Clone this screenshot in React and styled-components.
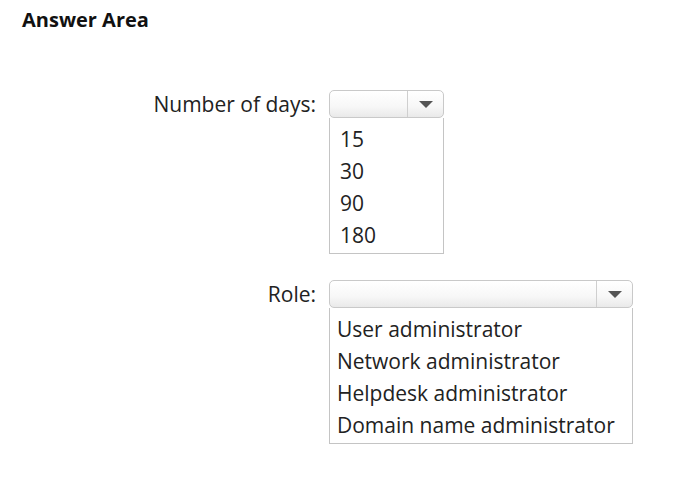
import styled, { createGlobalStyle } from "styled-components";

const GlobalStyle = createGlobalStyle`
  body {
    margin: 0;
    background: #ffffff;
    font-family: "Open Sans", "Noto Sans", sans-serif;
    color: #222;
  }
`;

const Page = styled.div`
  width: 676px;
  height: 481px;
  padding: 6px 0 0 22px;
  box-sizing: border-box;
`;

const Title = styled.h1`
  margin: 0;
  font-size: 20px;
  font-weight: 700;
  color: #111;
  line-height: 28px;
`;

const Form = styled.div`
  display: grid;
  grid-template-columns: 294px auto;
  column-gap: 13px;
  row-gap: 26px;
  margin-top: 56px;
  align-items: start;
`;

const Label = styled.div`
  text-align: right;
  font-size: 21px;
  line-height: 28px;
  color: #222;
`;

const Select = styled.div`
  display: flex;
  flex-direction: column;
  width: ${(p) => p.width}px;
`;

const Box = styled.div`
  display: flex;
  height: 28px;
  box-sizing: border-box;
  border: 1px solid #c9c9c9;
  border-radius: 5px;
  background: linear-gradient(#ffffff 0%, #f7f7f7 60%, #e9e9e9 100%);
`;

const Value = styled.div`
  flex: 1;
`;

const Arrow = styled.div`
  width: 35px;
  border-left: 1px solid #cfcfcf;
  display: flex;
  align-items: center;
  justify-content: center;

  &::after {
    content: "";
    border-left: 7px solid transparent;
    border-right: 7px solid transparent;
    border-top: 7px solid #555;
  }
`;

const List = styled.ul`
  list-style: none;
  margin: 0;
  padding: 5px 0 2px ${(p) => p.indent}px;
  border: 1px solid #c4c4c4;
  border-top: none;
  width: ${(p) => p.width}px;
  box-sizing: border-box;
`;

const Item = styled.li`
  font-size: 21px;
  line-height: 32px;
  color: #222;
`;

function Dropdown({ width, indent, options }) {
  return (
    <Select width={width}>
      <Box>
        <Value />
        <Arrow />
      </Box>
      <List width={width} indent={indent}>
        {options.map((o) => (
          <Item key={o}>{o}</Item>
        ))}
      </List>
    </Select>
  );
}

export default function App() {
  return (
    <>
      <GlobalStyle />
      <Page>
        <Title>Answer Area</Title>
        <Form>
          <Label>Number of days:</Label>
          <Dropdown width={115} indent={10} options={["15", "30", "90", "180"]} />
          <Label>Role:</Label>
          <Dropdown
            width={304}
            indent={7}
            options={[
              "User administrator",
              "Network administrator",
              "Helpdesk administrator",
              "Domain name administrator",
            ]}
          />
        </Form>
      </Page>
    </>
  );
}
